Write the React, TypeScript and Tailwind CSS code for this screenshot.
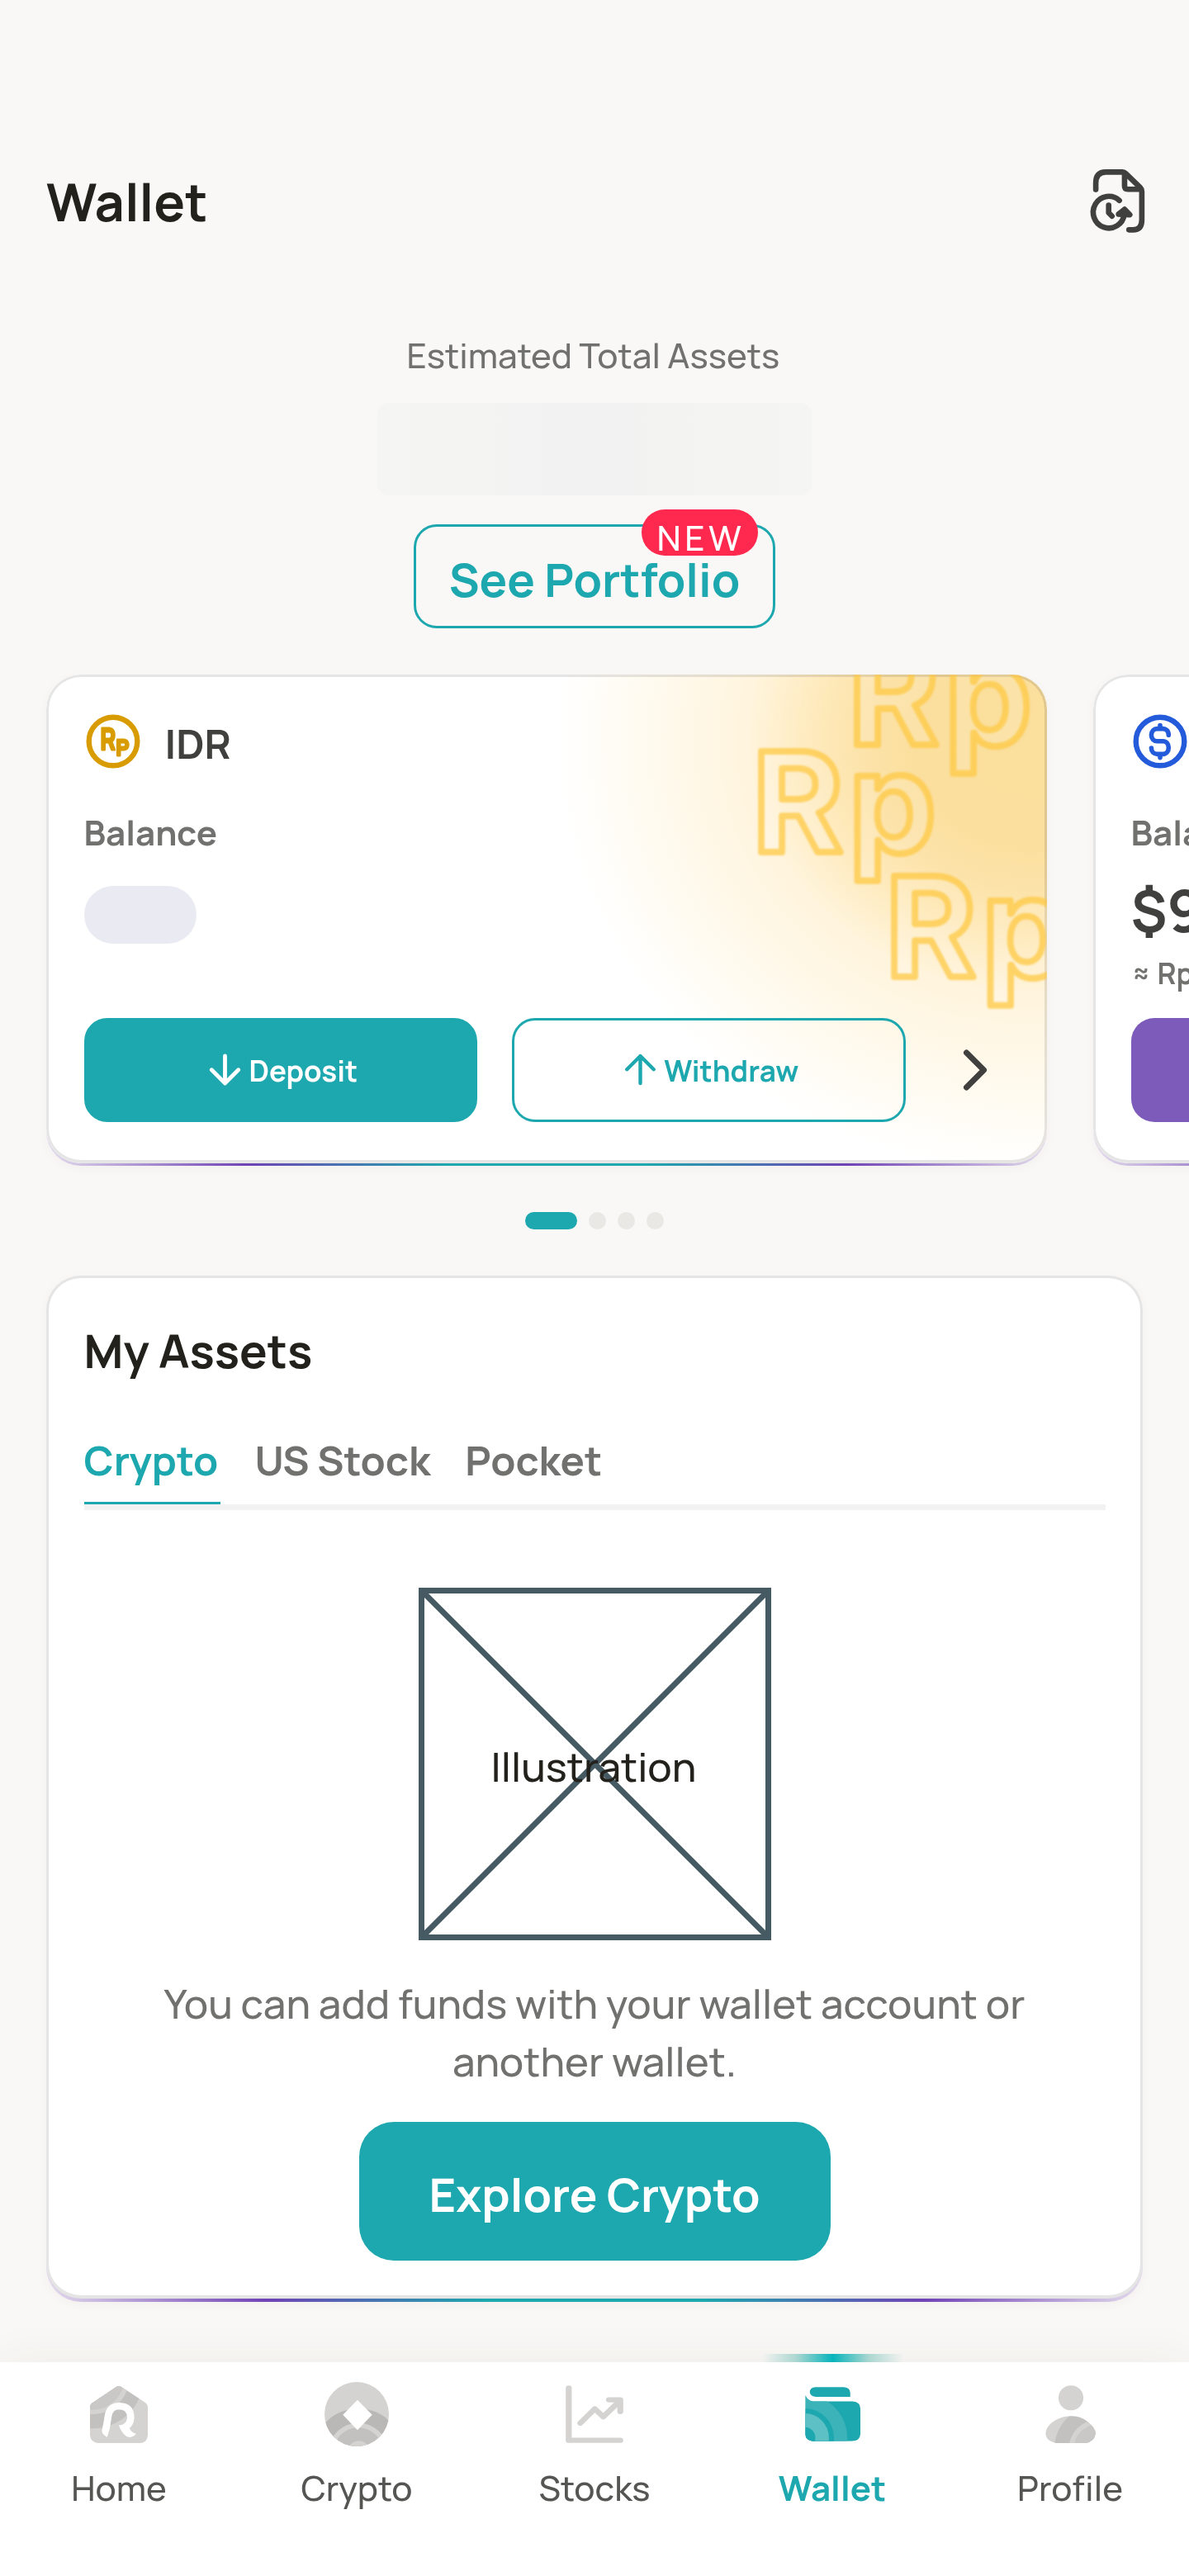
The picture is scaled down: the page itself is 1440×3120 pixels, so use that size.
import type { ReactNode } from "react";

function HistoryIcon() {
  return (
    <svg viewBox="363 133 201 232" className="h-[77px] w-[67px]" fill="none" stroke="#40403e" strokeWidth="20" strokeLinecap="round" strokeLinejoin="round">
      <path d="M384 207V184Q384 143 420 143H481Q488 143 494 149L546 200Q552 206 552 214V318Q552 354 520 354H505" />
      <path d="M489 150V194Q489 206 501 206H545" />
      <path d="M470 247A57 58 0 1 0 488 298" />
      <path d="M467 297L489 279L508 299Z" fill="#40403e" />
      <path d="M431 264V292L443 304" />
    </svg>
  );
}

function RupiahCoin() {
  return (
    <svg viewBox="0 0 70 70" className="size-[70px] shrink-0">
      <circle cx="35" cy="35" r="29.3" fill="none" stroke="#d89c00" strokeWidth="6.4" />
      <g fill="#d89c00" stroke="#d89c00" strokeWidth="2.8" strokeLinejoin="round" className="font-[Manrope,Inter,sans-serif] font-bold">
        <text x="19.6" y="45.2" fontSize="35.5" textLength="18.6" lengthAdjust="spacingAndGlyphs">R</text>
        <text x="38.4" y="52.4" fontSize="26" textLength="15.6" lengthAdjust="spacingAndGlyphs">P</text>
      </g>
    </svg>
  );
}

function DollarCoin() {
  return (
    <svg viewBox="0 0 70 70" className="size-[70px] shrink-0" fill="none" stroke="#245bdb" strokeLinecap="round" strokeLinejoin="round">
      <circle cx="35" cy="35" r="29.3" strokeWidth="6.4" />
      <path strokeWidth="5.6" d="M45.3 27.2C45.3 22 42 19.6 38.4 19.6H31.6C27.6 19.6 24.4 22.6 24.4 27.2S27.6 34.8 31.6 34.8H38.4C42.4 34.8 45.3 38 45.3 42.6S42.4 50.4 38.4 50.4H31.6C27.6 50.4 24.4 47.4 24.4 43M35 15.6V19M35 51V54.6" />
    </svg>
  );
}

function ArrowDownIcon() {
  return (
    <svg viewBox="0 0 49 49" className="size-[49px]" fill="none" stroke="currentColor" strokeWidth="4.8" strokeLinecap="round" strokeLinejoin="round">
      <path d="M24.5 8V41M8.3 24.8L24.5 41L40.7 24.8" />
    </svg>
  );
}

function ArrowUpIcon() {
  return (
    <svg viewBox="0 0 49 49" className="size-[49px]" fill="none" stroke="currentColor" strokeWidth="4.4" strokeLinecap="round" strokeLinejoin="round">
      <path d="M24.5 41V8M8.3 24.2L24.5 8L40.7 24.2" />
    </svg>
  );
}

function HomeIcon() {
  return (
    <svg viewBox="317 508 203 209" preserveAspectRatio="none" className="h-[70px] w-[70px]">
      <clipPath id="house">
        <path d="M409 514Q418 508 427 514L510 570Q520 577 520 588V690Q517 717 490 717H347Q320 715 317 690V588Q317 577 327 571Z" />
      </clipPath>
      <g clipPath="url(#house)">
        <path fill="#d4d3d1" d="M317 508H520V717H317Z" />
        <circle cx="325" cy="485" r="179" fill="#c2c1bf" />
        <circle cx="325" cy="485" r="128" fill="#d4d3d1" />
        <circle cx="325" cy="485" r="112" fill="#c9c8c6" />
      </g>
      <path fill="none" stroke="#fff" strokeWidth="25" strokeLinejoin="round" d="M374 663L381 618Q387 583 420 583Q460 584 460 625Q459 645 445 656" />
      <path fill="#fff" d="M361.600 661Q352 682 377 696L386.300 665V650H363ZM418 653Q430 653 438 646L455 663Q464 680 479 683Q470 696 456 696Q444 695 436 685Q424 672 418 653Z" />
    </svg>
  );
}

function CryptoIcon() {
  return (
    <svg viewBox="1141 495 227 233" preserveAspectRatio="none" className="h-[78px] w-[78px]">
      <clipPath id="coin">
        <ellipse cx="1254.5" cy="611.5" rx="113.5" ry="116.5" />
      </clipPath>
      <g clipPath="url(#coin)">
        <path fill="#d4d3d1" d="M1141 495H1368V728H1141Z" />
        <circle cx="1260" cy="747" r="156" fill="#b9b8b6" />
        <circle cx="1260" cy="747" r="104" fill="#d4d3d1" />
        <circle cx="1260" cy="747" r="87" fill="#c2c1bf" />
        <circle cx="1262" cy="747" r="39" fill="#d4d3d1" />
      </g>
      <path fill="#fff" d="M1257 560L1309 614L1257 669L1206 614Z" />
    </svg>
  );
}

function StocksIcon() {
  return (
    <svg viewBox="378 506 184 211" preserveAspectRatio="none" className="h-[70px] w-[70px]" fill="none" stroke="#d4d3d1" strokeWidth="19" strokeLinecap="round" strokeLinejoin="round">
      <path d="M388 516V707H552" />
      <path d="M425 644L471 592L498 621L548 566" />
      <path d="M516 559H552V602" />
    </svg>
  );
}

function WalletIcon() {
  return (
    <svg viewBox="1135 513 175 196" preserveAspectRatio="none" className="h-[66px] w-[67px]">
      <clipPath id="purse">
        <path d="M1136 543Q1143 564 1160 565H1285Q1310 567 1310 590V684Q1308 708 1283 708H1160Q1137 706 1136 684Z" />
      </clipPath>
      <path fill="#1da7ae" d="M1168 514H1258Q1278 516 1278 535V549H1168Q1150 546 1150 531Q1150 516 1168 514Z" />
      <g clipPath="url(#purse)">
        <path fill="#1da7ae" d="M1135 513H1310V709H1135Z" />
        <ellipse cx="1134.5" cy="696" rx="134" ry="154" fill="#3bb3b9" />
        <ellipse cx="1134.5" cy="696" rx="92" ry="106" fill="#1da7ae" />
        <ellipse cx="1134.5" cy="696" rx="76" ry="88" fill="#5dc0c4" />
        <ellipse cx="1134.5" cy="696" rx="33" ry="38" fill="#1da7ae" />
      </g>
    </svg>
  );
}

function ProfileIcon() {
  return (
    <svg viewBox="495 506 183 211" className="h-[70px] w-[61px]">
      <clipPath id="torso">
        <path d="M495 682Q497 655 530 634Q558 618 590 618Q624 618 647 638Q678 662 678 682Q674 712 640 717H537Q499 712 495 682Z" />
      </clipPath>
      <circle cx="588" cy="552" r="45.5" fill="#d4d3d1" />
      <g clipPath="url(#torso)">
        <path fill="#d4d3d1" d="M495 610H678V717H495Z" />
        <circle cx="690" cy="740" r="163" fill="#c2c1bf" />
        <circle cx="690" cy="740" r="110" fill="#d4d3d1" />
        <circle cx="690" cy="740" r="93" fill="#c9c8c6" />
      </g>
    </svg>
  );
}

const GLOW_CARD = "rounded-[42px] bg-[linear-gradient(90deg,rgba(111,66,182,0.16)_0%,#6f42b6_20%,#1da7ae_40%,#1da7ae_60%,#6f42b6_80%,rgba(111,66,182,0.16)_100%)] bg-[length:100%_60px] bg-bottom bg-no-repeat shadow-[0_3px_14px_rgba(60,40,30,0.035)]";

function WalletCard({ watermark, children }: { watermark?: ReactNode; children: ReactNode }) {
  return (
    <article className={`w-[1212px] shrink-0 pb-[3px] ${GLOW_CARD}`}>
      <div className="relative h-[592px] overflow-hidden rounded-[42px] bg-white">
        <div className="absolute inset-0 rounded-[42px] border-3 border-b-4 border-[#e5e5e5]" />
        {watermark}
        <div className="relative px-[45.5px] pt-[45.5px]">{children}</div>
      </div>
    </article>
  );
}

function RupiahWatermark() {
  return (
    <>
      <div className="absolute inset-0 bg-[radial-gradient(575px_520px_at_1194px_80px,#feefcc_0%,#feefcc_35%,#fff4dc_58%,#fffaee_80%,#ffffff_100%)] mix-blend-multiply" />
      <div className="absolute inset-0 bg-[radial-gradient(345px_310px_at_1194px_75px,#fbeec4_0%,#fceec6_42%,#fef6de_72%,#ffffff_100%)] mix-blend-multiply" />
      <svg viewBox="0 0 1212 592" className="absolute inset-0 h-[592px] w-[1212px] font-[Inter,sans-serif] text-[168px] font-bold blur-[0.8px]" fill="rgba(255,255,255,0.12)" stroke="rgba(254,200,65,0.74)" strokeWidth="7.8" strokeLinejoin="round">
        <text x="971 1088" y="85">Rp</text>
        <text x="855 972" y="215">Rp</text>
        <text x="1016 1133" y="366">Rp</text>
      </svg>
    </>
  );
}

function CardHeader({ icon, name }: { icon: ReactNode; name: string }) {
  return (
    <>
      <div className="flex h-[70px] items-center gap-7">
        {icon}
        <h2 className="pt-[6px] text-[49px] leading-[64px] font-bold text-[#40403e]">{name}</h2>
      </div>
      <p className="mt-[47px] text-[42px] leading-[56px] font-bold text-[#71716f]">Balance</p>
    </>
  );
}

const TABS = ["Crypto", "US Stock", "Pocket"];

const NAV = [
  { label: "Home", icon: <HomeIcon /> },
  { label: "Crypto", icon: <CryptoIcon /> },
  { label: "Stocks", icon: <StocksIcon /> },
  { label: "Wallet", icon: <WalletIcon />, active: true },
  { label: "Profile", icon: <ProfileIcon /> },
];

export default function App() {
  return (
    <div className="flex h-[3120px] w-[1440px] flex-col overflow-hidden bg-[#f9f8f6] font-[Manrope,Inter,sans-serif] text-[#23211c]">
      <header className="mt-[195px] flex h-24 shrink-0 items-center justify-between pr-[53px] pl-14">
        <h1 className="pt-[2px] text-[63px] leading-[80px] font-bold">Wallet</h1>
        <HistoryIcon />
      </header>

      <section className="mt-[109px] flex shrink-0 flex-col items-center">
        <p className="pr-[3px] text-[42px] leading-[60px] font-medium text-[#71716f]">Estimated Total Assets</p>
        <div className="mt-7 h-28 w-[526px] rounded-[14px] bg-linear-to-r from-[#f5f5f4] via-[#f2f2f2] to-[#f5f5f3]" />
        <button className="relative mt-[35px] flex h-[126px] w-[438px] items-center justify-center rounded-[28px] border-3 border-[#1da7ae] pt-[7px] text-[56px] leading-[72px] font-bold text-[#1da7ae]">
          See Portfolio
          <span className="absolute -top-[21px] right-[18px] flex h-14 w-[141px] items-center justify-center rounded-full bg-[#ff284e] pt-[11px] pl-[3px] text-[42px] leading-[46px] font-medium tracking-[4.6px] text-white">NEW</span>
        </button>
      </section>

      <section className="mt-14 flex shrink-0 gap-14 pl-14">
        <WalletCard watermark={<RupiahWatermark />}>
          <CardHeader icon={<RupiahCoin />} name="IDR" />
          <div className="mt-[37px] h-40">
            <div className="h-[70px] w-[136px] rounded-full bg-[#eaeaf2]" />
          </div>
          <div className="flex h-[126px] items-center gap-[42px] text-[35px] leading-[48px] font-bold">
            <button className="flex h-full flex-1 items-center justify-center gap-1 rounded-[28px] border-3 border-[#1da7ae] bg-[#1da7ae] pl-[2px] text-white">
              <ArrowDownIcon />
              <span className="pt-[3px]">Deposit</span>
            </button>
            <button className="flex h-full flex-1 items-center justify-center gap-1 rounded-[28px] border-3 border-[#1da7ae] pl-[2px] text-[#1da7ae]">
              <ArrowUpIcon />
              <span className="pt-[3px]">Withdraw</span>
            </button>
            <div className="flex w-[84px] justify-center">
              <svg viewBox="0 0 30 50" className="h-[50px] w-[30px]" fill="none" stroke="#40403e" strokeWidth="7" strokeLinecap="round" strokeLinejoin="round">
                <path d="M4.5 4L25.5 25L4.5 46" />
              </svg>
            </div>
          </div>
        </WalletCard>
        <WalletCard>
          <CardHeader icon={<DollarCoin />} name="USD" />
          <div className="mt-[31px] h-[166px] text-[#40403e]">
            <p className="text-[70px] leading-[70px] font-bold">$9</p>
            <p className="mt-[17px] text-[35px] leading-[50px] font-bold text-[#71716f]">≈ Rp</p>
          </div>
          <button className="block h-[126px] w-[477px] rounded-[28px] bg-[#7d5bbb]" />
        </WalletCard>
      </section>

      <div className="mt-14 flex h-[21px] shrink-0 justify-center gap-[14px]">
        <span className="w-[63px] rounded-full bg-[#1da7ae]" />
        <span className="w-[21px] rounded-full bg-[#e9e8e4]" />
        <span className="w-[21px] rounded-full bg-[#e9e8e4]" />
        <span className="w-[21px] rounded-full bg-[#e9e8e4]" />
      </div>

      <section className={`mx-14 mt-14 shrink-0 pb-[4px] ${GLOW_CARD}`}>
        <div className="flex h-[1239px] flex-col items-center rounded-[42px] border-3 border-b-4 border-[#e5e5e5] bg-white px-[42.5px]">
          <h2 className="mt-[52px] w-full text-[56px] leading-[72px] font-bold">My Assets</h2>
          <div className="mt-16 flex h-[86px] w-full items-stretch gap-[42px] text-[49px] leading-[65px] font-bold text-[#71716f]">
            {TABS.map((tab, i) => (
              <span key={tab} className={i === 0 ? "w-[165px] border-b-3 border-[#1da7ae] text-[#1da7ae]" : ""}>{tab}</span>
            ))}
          </div>
          <div className="h-[7px] w-full bg-[#f2f2f2]" />
          <div className="relative mt-[94px] flex size-[427px] items-center justify-center border-7 border-[#465a64]">
            <svg viewBox="0 0 413 413" className="absolute inset-0 size-full" stroke="#465a64" strokeWidth="7">
              <path d="M0 0L413 413M413 0L0 413" />
            </svg>
            <span className="relative pt-[6px] pr-[2px] text-[49px] leading-[64px] font-medium">Illustration</span>
          </div>
          <p className="mt-[42px] w-[1120px] text-center text-[49px] leading-[70px] font-medium text-[#71716f]">You can add funds with your wallet account or another wallet.</p>
          <button className="mt-[38px] flex h-[168px] w-[571px] items-center justify-center rounded-[42px] bg-[#1da7ae] pt-[7px] text-[56px] leading-[72px] font-bold text-white">Explore Crypto</button>
        </div>
      </section>

      <nav className="mt-[73px] grid h-[259px] shrink-0 grid-cols-5 bg-white shadow-[0_-6px_50px_rgba(60,50,40,0.05)]">
        {NAV.map(({ label, icon, active }) => (
          <div key={label} className={`relative flex flex-col items-center text-[42px] leading-[56px] ${active ? "font-bold text-[#1da7ae]" : "font-medium text-[#555553]"}`}>
            {active && <span className="absolute -top-[10px] h-[10px] w-[171px] bg-[linear-gradient(90deg,rgba(0,150,140,0)_0%,rgba(10,150,135,0.3)_24%,#07b4bb_50%,rgba(10,150,135,0.3)_76%,rgba(0,150,140,0)_100%)]" />}
            <span className="mt-[21px] flex h-[84px] items-center justify-center">{icon}</span>
            <span className="mt-[19px]">{label}</span>
          </div>
        ))}
      </nav>
    </div>
  );
}
